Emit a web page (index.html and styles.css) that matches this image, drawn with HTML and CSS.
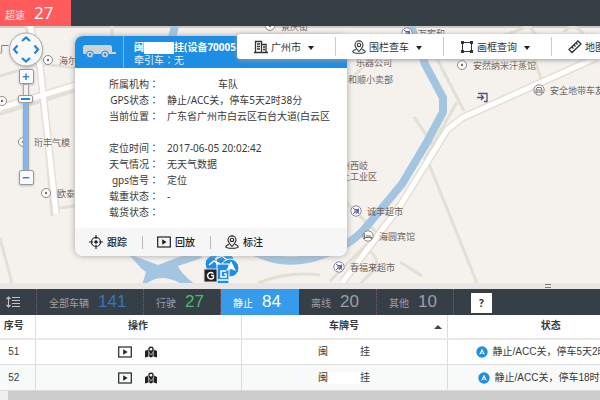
FILE: index.html
```html
<!DOCTYPE html>
<html lang="zh-CN">
<head>
<meta charset="utf-8">
<title>车辆监控</title>
<link rel="stylesheet" href="styles.css">
</head>
<body>
<svg class="defs" aria-hidden="true">
  <symbol id="pin" viewBox="0 0 14 14"><g fill="none" stroke="currentColor" stroke-width="1.1"><path d="M7 11.5C4.500 8.600 3 7 3 4.900a4 4 0 0 1 8 0C11 7 9.500 8.600 7 11.500z"/><circle cx="7" cy="4.900" r="1.700"/><path d="M4 9.500C2 10 .8 10.800.8 11.700c0 1 2.200 1.600 6.200 1.600s6.200-.6 6.200-1.600c0-.9-1.200-1.700-3.200-2.200"/></g></symbol>
  <symbol id="play" viewBox="0 0 14 12"><rect x=".7" y="1" width="12.600" height="10" fill="none" stroke="currentColor" stroke-width="1.200"/><path d="M5.200 3.300v5.400L9.600 6z" fill="currentColor"/></symbol>
  <symbol id="track" viewBox="0 0 12 12"><path d="M0 11.500V5l3-1.500L6 8l3-4.500L12 5v6.500L8.200 10.500 6 11.500l-2.200-1z" fill="currentColor"/><path d="M3.800 5v6M8.200 5v6" stroke="#fff" stroke-width=".7"/><path d="M6 9C4.200 6.500 3 5 3 3.200a3 3 0 0 1 6 0C9 5 7.800 6.500 6 9z" fill="currentColor" stroke="#fff" stroke-width=".5"/><circle cx="6" cy="3.200" r="1.300" fill="#fff"/></symbol>
  <symbol id="nav" viewBox="0 0 12 12"><circle cx="6" cy="6" r="5.700" fill="#1e8de4"/><path d="M6 2.500l2.900 6.200L6 7.300 3.100 8.700z" fill="#fff"/><path d="M6 5.200l1 2-1-.5-1 .5z" fill="#1e8de4"/></symbol>
  <symbol id="dot" viewBox="0 0 12 12"><circle cx="6" cy="6" r="4.500" fill="#fff" stroke="#8f8885"/><circle cx="6" cy="6" r="1.200" fill="#776e6c"/></symbol>
  <symbol id="shop" viewBox="0 0 12 12"><circle cx="6" cy="6" r="5.200" fill="#fff" stroke="#8584ad"/><path d="M3 3l2 1.500v2.500L3 9M5 4.500h3.500V7H5M8.500 3.500L6 9M6.500 5l2.500 4" fill="none" stroke="#5c5c98"/></symbol>
  <symbol id="bed" viewBox="0 0 12 12"><circle cx="6" cy="6" r="5.200" fill="#fff" stroke="#8f8885"/><path d="M2.500 3.500V9M2.500 7.500h7V9M4 6h5" fill="none" stroke="#776e6c" stroke-width="1.200"/></symbol>
  <symbol id="car" viewBox="0 0 12 12"><circle cx="6" cy="6" r="5.200" fill="#fff" stroke="#8f8885"/><path d="M3 9V6l1-2.500h4L9 6v3H8V8H4v1zM3 6h6" fill="none" stroke="#776e6c"/></symbol>
</svg>

<header class="topbar"><a class="alarm" href="#">超速 <strong>27</strong></a></header>

<main class="map">
  <svg class="roads" viewBox="0 0 600 257" preserveAspectRatio="xMinYMin slice" aria-hidden="true">
    <g class="lane">
      <path d="M26 0l4 20M38 20l14 170M112 0v12M0 50l40-12 40 4M0 212l12 45"/>
      <path d="M0 88l75-23M52 183l30-4"/>
      <path d="M348 56l20-20M434 27l30 58M414 91l22 32M457 76l-33 58M429 138l48 119M505 9l24-9 14 17 6 14M564 6q8-10 18 0l4 9M534 32l8 24"/>
      <path d="M340 170l45 45M368 224q15 10 4 22l-12 12M330 255l40-40M400 236l22 14"/>
      <path d="M258 257q30-12 62-8"/>
    </g>
    <path class="water" d="M175 0l-3 12M411 0l3 8 11 30 18 34v14l-16 30-25 42-35 42q-14 18-42 28-37 14-68-1l-10-4"/>
    <path class="lake" d="M127 227l23 9 8 3 40-15 4 8-24 8q3 8 18 19h-13q-22-14-38 0h-3l4-13-4-3z"/>
    <g class="road-edge"><path d="M30 0l10 40 16 148M0 82l76-23M342 257l58-77 47-76 15-12 138-62"/></g>
    <g class="road"><path d="M30 0l10 40 16 148M0 82l76-23M342 257l58-77 47-76 15-12 138-62"/></g>
  </svg>

  <ul class="places">
    <li class="place p-jufu">柜厂</li>
    <li class="place p-haier"><svg><use href="#dot"/></svg>海尔</li>
    <li class="place p-left"><svg><use href="#dot"/></svg></li>
    <li class="place p-hengfeng"><svg><use href="#dot"/></svg>珩丰气模</li>
    <li class="place p-outai"><svg><use href="#dot"/></svg>欧泰</li>
    <li class="place p-street"><svg><use href="#dot"/></svg>景庆街</li>
    <li class="place p-wanjia"><svg><use href="#shop"/></svg>万家和</li>
    <li class="place p-music">乐器公司</li>
    <li class="place p-heshun">和顺小卖部</li>
    <li class="place p-anran"><svg><use href="#dot"/></svg>安然纳米汗蒸馆</li>
    <li class="place p-anquan"><svg><use href="#car"/></svg>安全地带车友</li>
    <li class="place p-xiqi">州西岐<br>上工业区</li>
    <li class="place p-chengfeng"><svg><use href="#shop"/></svg>诚丰超市</li>
    <li class="place p-haiyuan"><svg><use href="#bed"/></svg>海圆宾馆</li>
    <li class="place p-chunfu"><svg><use href="#shop"/></svg>春福来超市</li>
  </ul>
  <svg class="gate" viewBox="0 0 12 12" aria-hidden="true"><path d="M2 1.500h9v8H8M1 5.500h6M5 3l2.500 2.500L5 8" fill="none" stroke="#50507f" stroke-width="1.300"/></svg>

  <svg class="vehicles" viewBox="0 0 38 34" aria-hidden="true">
    <g fill="#1e8de4" stroke="#fff" stroke-width="1"><circle cx="11" cy="12" r="9"/><circle cx="22" cy="9" r="9"/><circle cx="27" cy="16" r="9"/><rect x="14" y="12" width="12" height="24"/></g>
    <path d="M28 9l5 10-5-2-5 2z" fill="#fff"/><path d="M6 13l5-4 6 3M12 7l7-3 5 4" fill="none" stroke="#fff" stroke-width="1.500"/>
    <path d="M23 19h-5v6h5v-3h-2M14.500 28h11" fill="none" stroke="#fff" stroke-width="1.500"/>
    <rect x="1" y="17" width="13" height="13" fill="#222" stroke="#ddd"/><path d="M10.500 21.500q-3-2-5 0t0 4.500q2.500 2 5 0v-2.500H8" fill="none" stroke="#fff" stroke-width="1.400"/>
  </svg>

  <div class="map-control">
    <svg class="compass" viewBox="0 0 36 36" aria-hidden="true"><circle cx="18" cy="17.500" r="16.500" fill="#f8f8f8" stroke="#aaa"/><path d="M14 9l4-3.500L22 9M14 26l4 3.500 4-3.500M9.500 13.500L6 17.500l3.500 4M26.500 13.500l3.500 4-3.500 4" fill="none" stroke="#2385dc" stroke-width="2.200"/></svg>
    <button class="zoom" aria-label="放大">+</button>
    <div class="track"><span class="thumb"></span></div>
    <button class="zoom" aria-label="缩小">−</button>
  </div>

  <article class="card">
    <header class="card-head">
      <div class="card-icon"><svg viewBox="0 0 34 16" aria-hidden="true"><path d="M3 1h25q2 0 2 3v4h4v2H1V4q0-3 2-3z" fill="#ced3d8"/><g fill="#ced3d8" stroke="#1e8de4"><circle cx="8" cy="10.500" r="3.500"/><circle cx="23" cy="10.500" r="3.500"/></g><g fill="#1e8de4"><circle cx="8" cy="10.500" r="1.200"/><circle cx="23" cy="10.500" r="1.200"/></g></svg></div>
      <div class="card-title"><h2>闽<span class="mask"></span>挂(设备70005</h2><p>牵引车<span class="colon" lang="zh-TW">：</span>无</p></div>
    </header>
    <dl class="facts">
      <dt>所属机构<span class="colon" lang="zh-TW">：</span></dt><dd class="org">车队</dd>
      <dt>GPS状态<span class="colon" lang="zh-TW">：</span></dt><dd>静止/ACC关，停车5天2时38分</dd>
      <dt>当前位置<span class="colon" lang="zh-TW">：</span></dt><dd>广东省广州市白云区石台大道(白云区</dd>
      <dt>定位时间<span class="colon" lang="zh-TW">：</span></dt><dd>2017-06-05 20:02:42</dd>
      <dt>天气情况<span class="colon" lang="zh-TW">：</span></dt><dd>无天气数据</dd>
      <dt>gps信号<span class="colon" lang="zh-TW">：</span></dt><dd>定位</dd>
      <dt>载重状态<span class="colon" lang="zh-TW">：</span></dt><dd>-</dd>
      <dt>载货状态<span class="colon" lang="zh-TW">：</span></dt><dd></dd>
    </dl>
    <footer class="card-foot">
      <button><svg viewBox="0 0 14 14" aria-hidden="true"><circle cx="7" cy="7" r="4.500" fill="none" stroke="currentColor" stroke-width="1.200"/><circle cx="7" cy="7" r="1.800" fill="currentColor"/><path d="M7 0v4M7 10v4M0 7h4M10 7h4" stroke="currentColor" stroke-width="1.200"/></svg>跟踪</button>
      <button><svg><use href="#play"/></svg>回放</button>
      <button><svg><use href="#pin"/></svg>标注</button>
    </footer>
  </article>

  <nav class="toolbar">
    <button><svg viewBox="0 0 14 14" aria-hidden="true"><path d="M1.500 13V1.500h6V13M7.500 4.500h4.500V13M0 12.500h14M3 4h3M3 6.500h3M3 9h3M9 7h2M9 9.500h2" fill="none" stroke="currentColor" stroke-width="1.300"/></svg>广州市<i></i></button>
    <button><svg><use href="#pin"/></svg>围栏查车<i></i></button>
    <button><svg viewBox="0 0 14 14" aria-hidden="true"><path d="M2.500 2.500h9v9h-9z" fill="none" stroke="currentColor"/><path d="M1 1h3v3H1zM10 1h3v3h-3zM1 10h3v3H1zM10 10h3v3h-3z" fill="currentColor"/></svg>画框查询<i></i></button>
    <button><svg viewBox="0 0 14 14" aria-hidden="true"><path d="M1 9.500L10 1l3 3-9 8.500zM4 7l1.500 1.500M6 5l1.500 1.500M8 3l1.500 1.500" fill="none" stroke="currentColor" stroke-width="1.300"/></svg>地图</button>
  </nav>
</main>

<div class="splitter"><span></span></div>

<nav class="tabs">
  <button class="tab sort" aria-label="排序"><svg viewBox="0 0 14 12" aria-hidden="true"><path d="M2.500 1v10M.5 3l2-2 2 2M.5 9l2 2 2-2M6 1.500h8M6 4.500h8M6 7.500h8M6 10.500h8" fill="none" stroke="#c4bfc0" stroke-width="1.100"/></svg></button>
  <button class="tab all">全部车辆 <b>141</b></button>
  <button class="tab running">行驶 <b>27</b></button>
  <button class="tab active">静止 <b>84</b></button>
  <button class="tab offline">离线 <b>20</b></button>
  <button class="tab other">其他 <b>10</b></button>
  <button class="help">?</button>
</nav>

<div class="grid">
  <table>
    <colgroup><col class="c-no"><col class="c-act"><col class="c-plate"><col class="c-state"></colgroup>
    <thead><tr><th>序号</th><th>操作</th><th class="sorted">车牌号<i></i></th><th>状态</th></tr></thead>
    <tbody>
      <tr><td>51</td><td><span class="acts"><svg><use href="#play"/></svg><svg><use href="#track"/></svg></span></td><td>闽<span class="hidden-no"></span>挂</td><td class="state"><svg><use href="#nav"/></svg>静止/ACC关，停车5天2时</td></tr>
      <tr><td>52</td><td><span class="acts"><svg><use href="#play"/></svg><svg><use href="#track"/></svg></span></td><td>闽<span class="hidden-no"></span>挂</td><td class="state later"><svg><use href="#nav"/></svg>静止/ACC关，停车18时</td></tr>
    </tbody>
  </table>
</div>
<div class="scrollbar"><span></span></div>
</body>
</html>
```

FILE: styles.css
```css
* { box-sizing: border-box; }
html, body { height: 100%; }
body {
  margin: 0;
  display: flex;
  flex-direction: column;
  overflow: hidden;
  background: #fff;
  color: #3a3a3a;
  font: 10px/16px "Noto Sans", "Noto Sans CJK SC", sans-serif;
}
button { border: 0; margin: 0; padding: 0; background: none; color: inherit; font: inherit; white-space: nowrap; }
h2, p, dl, dd, ul { margin: 0; padding: 0; }
svg { display: block; flex: none; }
.defs { position: absolute; width: 0; height: 0; }

.topbar { flex: none; height: 26px; display: flex; background: #373f46; }
.alarm {
  width: 71px;
  padding-left: 5px;
  display: flex;
  align-items: baseline;
  gap: 9px;
  background: #ff5a5c;
  color: #ffe4e4;
  text-decoration: none;
}
.alarm strong { color: #fff; font: 17px/26px "Noto Sans", sans-serif; }

.map { flex: 1; min-height: 0; position: relative; overflow: hidden; background: #f5f2ed; }
.map::before { content: ""; position: absolute; inset: 0 0 auto; height: 2px; background: #cfccc8; }
.roads { position: absolute; inset: 0; width: 100%; height: 100%; fill: none; }
.lane path { stroke: #e2dfd5; stroke-width: 3; }
.lane { stroke-linejoin: round; }
.road-edge { stroke: #e2dfd5; stroke-width: 8; }
.road { stroke: #fff; stroke-width: 5; }
.water { stroke: #a3c5e2; stroke-width: 8; }
.lake { fill: #a3c5e2; }

.places { list-style: none; color: #6f6260; font-size: 9px; line-height: 11px; }
.place { position: absolute; display: flex; align-items: center; gap: 5px; white-space: nowrap; }
.place svg { width: 12px; height: 12px; }
.p-jufu { left: -9px; top: 18px; }
.p-haier { left: 42px; top: 28px; }
.p-left { left: -4px; top: 69px; }
.p-hengfeng { left: 17px; top: 110px; }
.p-outai { left: 40px; top: 161px; }
.p-street { left: 264px; top: -6px; }
.p-wanjia { left: 401px; top: 1px; }
.p-music { left: 356px; top: 31px; }
.p-heshun { left: 348px; top: 48px; }
.p-anran { left: 456px; top: 33px; }
.p-anquan { left: 533px; top: 58px; }
.p-xiqi { left: 341px; top: 134px; display: block; }
.p-chengfeng { left: 350px; top: 179px; }
.p-haiyuan { left: 362px; top: 204px; }
.p-chunfu { left: 333px; top: 235px; }
.gate { position: absolute; left: 476px; top: 66px; width: 12px; height: 12px; }
.vehicles { position: absolute; left: 203px; top: 226px; width: 38px; height: 34px; }

.map-control { position: absolute; left: 8px; top: 6px; width: 36px; display: flex; flex-direction: column; align-items: center; filter: drop-shadow(0 1px 1px #bbb); }
.compass { width: 36px; height: 36px; margin-bottom: 1px; }
.zoom { width: 15px; height: 15px; border: 1px solid #999; border-radius: 2px; background: #fafafa; color: #2385dc; font: bold 13px/12px "Liberation Sans", sans-serif; }
.track { position: relative; width: 6px; height: 86px; border: 1px solid #aaa; background: linear-gradient(#f5f2ed 18px, #7db8ef 18px); }
.thumb { position: absolute; left: -6px; top: 10px; width: 15px; height: 8px; border: 1px solid #999; border-radius: 2px; background: #fff linear-gradient(#2385dc, #2385dc) center / 9px 2px no-repeat; }

.card {
  position: absolute;
  left: 75px;
  top: 10px;
  width: 272px;
  border-radius: 8px;
  overflow: hidden;
  background: #fff;
  box-shadow: 0 0 6px #a5a29e;
}
.card-head { height: 32px; display: flex; background: #1e8de4; color: #fff; }
.card-icon { width: 49px; display: flex; align-items: center; justify-content: center; border-right: 1px solid #79b9ec; }
.card-icon svg { width: 34px; height: 16px; }
.card-title { padding: 5px 0 0 10px; white-space: nowrap; color: #e3f0fb; line-height: 13px; }
.card-title h2 { color: #fff; font-size: 10px; line-height: 13px; }
.colon { font-family: "Noto Sans CJK TC", sans-serif; line-height: 1; }
.mask { display: inline-block; width: 30px; height: 12px; vertical-align: middle; background: #fff; }
.facts { height: 160px; padding: 8px 0 8px 31px; display: grid; grid-template-columns: 53px 1fr; grid-template-rows: 16px 16px 32px; grid-auto-rows: 16px; column-gap: 8px; white-space: nowrap; }
.facts dt { text-align: right; }
.org { padding-left: 51px; }
.card-foot { height: 28px; padding-left: 14px; display: flex; align-items: center; background: #f6f6f6; color: #222; }
.card-foot button { display: flex; align-items: center; gap: 4px; font-weight: 500; }
.card-foot button + button { margin-left: 15px; padding-left: 14px; border-left: 1px solid #bbb; height: 13px; }
.card-foot svg { width: 14px; height: 14px; }

.toolbar { position: absolute; left: 237px; right: 0; top: 8px; height: 25px; display: flex; overflow: hidden; border-radius: 3px 0 0 3px; background: #fff; box-shadow: 0 1px 5px #999; color: #333; }
.toolbar button { flex: none; display: flex; align-items: center; gap: 3px; padding: 0 21px 0 17px; position: relative; }
.toolbar button + button::before { content: ""; position: absolute; left: 0; top: 3px; height: 19px; border-left: 1px solid #ccc; }
.toolbar svg { width: 14px; height: 14px; }
.toolbar i { border: 3px solid transparent; border-top: 4px solid #222; border-bottom: 0; margin: 3px 0 0 4px; }

.splitter { flex: none; height: 6px; display: flex; background: #e9e7e6; }
.splitter span { width: 6px; height: 4px; margin: 1px 0 0 545px; border: solid #777; border-width: 1px 0; }
.tabs { flex: none; height: 26px; display: flex; background: #373f46; color: #a19da7; }
.tab { height: 26px; display: flex; align-items: baseline; gap: 9px; padding-left: 12px; border-right: 1px dotted #6f6272; }
.tab b { font: 17px/26px "Liberation Sans", sans-serif; }
.sort { width: 37px; padding-left: 6px; align-items: center; }
.sort svg { width: 14px; height: 12px; }
.all { width: 107px; }
.all b { color: #3274c2; }
.running { width: 77px; }
.running b { color: #46bd6f; }
.active { width: 78px; border: 0; background: #369bea; color: #fff; }
.offline { width: 78px; }
.other { width: 77px; }
.help { width: 21px; height: 20px; margin: 4px 0 0 17px; background: #fff; color: #333; font-weight: bold; }

.grid { flex: none; overflow: hidden; }
table { width: 109%; min-width: 652px; table-layout: fixed; border-collapse: collapse; font-family: "Liberation Sans", "Noto Sans CJK SC", sans-serif; }
.c-no { width: 35px; }
.c-act { width: 206px; }
.c-plate { width: 206px; }
th, td { height: 26px; padding: 0; border-right: 1px solid #ddd; border-bottom: 1px solid #ddd; text-align: center; white-space: nowrap; overflow: hidden; }
th { height: 24px; border-bottom: 2px solid #eae9e6; font-weight: 700; position: relative; }
th:first-child, td:first-child { padding-right: 7px; }
th:last-child, td:last-child { border-right: 0; }
tbody tr:nth-child(2) { background: #f8faf9; }
.sorted i { position: absolute; right: 5px; top: 10px; border: 4px solid transparent; border-top: 0; border-bottom: 4px solid #444; }
.acts { display: flex; justify-content: center; gap: 12px; }
.acts svg { width: 14px; height: 12px; color: #222; }
.hidden-no { display: inline-block; width: 32px; height: 12px; vertical-align: middle; background: #fff; }
td.state { text-align: left; padding-left: 28px; }
td.later { padding-left: 30px; }
.state svg { display: inline-block; width: 12px; height: 12px; margin-right: 5px; vertical-align: middle; }
.scrollbar { flex: none; height: 9px; padding-left: 8px; background: #f0f0f0; }
.scrollbar span { display: block; height: 9px; background: #cdcdcd; }
```
